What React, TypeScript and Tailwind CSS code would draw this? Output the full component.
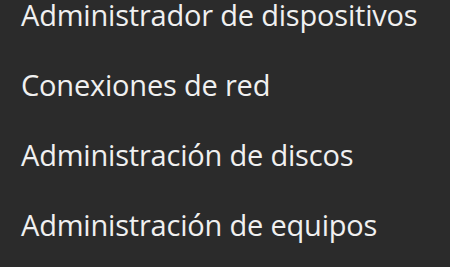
const items = [
  'Administrador de dispositivos',
  'Conexiones de red',
  'Administración de discos',
  'Administración de equipos',
];

export default function App() {
  return (
    <div className="h-[267px] w-[450px] overflow-hidden bg-[#2b2b2b]">
      <ul className="-mt-[20px] flex flex-col">
        {items.map((label) => (
          <li
            key={label}
            className="h-[70px] pl-[21px] text-[29px] leading-[70px] tracking-[-0.2px] text-[#f0f0f0] whitespace-nowrap [font-family:'Open_Sans',sans-serif]"
          >
            {label}
          </li>
        ))}
      </ul>
    </div>
  );
}
